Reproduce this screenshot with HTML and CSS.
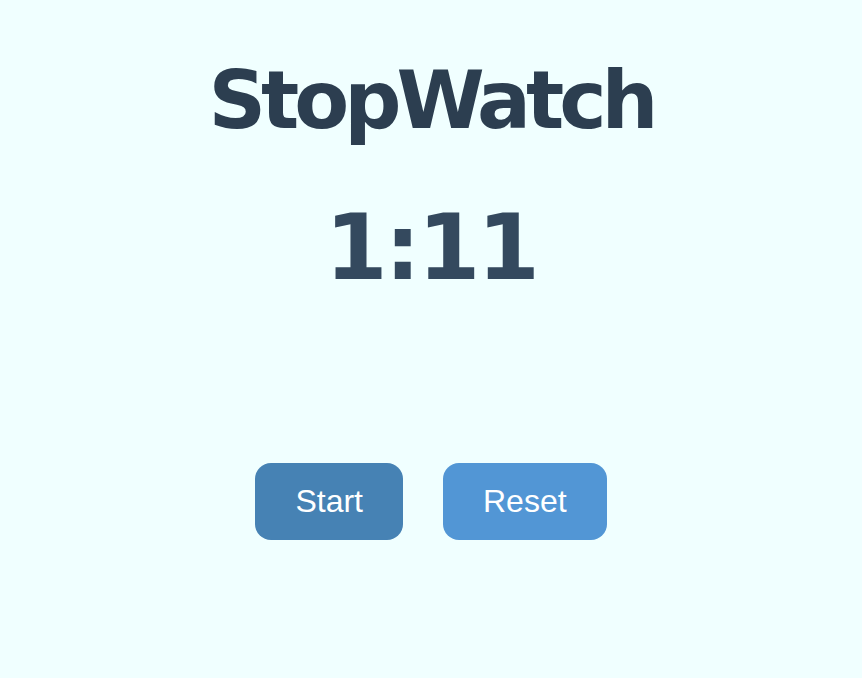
FILE: index.html
```html
<!DOCTYPE html>
<html>
<head>
<meta charset="utf-8">
<link rel="stylesheet" href="styles.css">
</head>
<body>
<main class="app">
  <h1 class="title">StopWatch</h1>
  <div class="time">1:11</div>
  <div class="controls">
    <button class="btn btn-start">Start</button>
    <button class="btn btn-reset">Reset</button>
  </div>
</main>
</body>
</html>
```
FILE: styles.css
```css
html, body {
  margin: 0;
  padding: 0;
  background: #f0ffff;
  height: 100%;
}
.app {
  display: flex;
  flex-direction: column;
  align-items: center;
  padding-top: 51px;
}
.title {
  margin: 0;
  font-family: "DejaVu Sans", sans-serif;
  font-weight: bold;
  font-size: 80px;
  line-height: 100px;
  color: #2c3e50;
  letter-spacing: -5px;
}
.time {
  margin-top: 42px;
  font-family: "DejaVu Sans", sans-serif;
  font-weight: bold;
  font-size: 90px;
  line-height: 110px;
  color: #34495e;
  letter-spacing: -3px;
}
.controls {
  display: flex;
  gap: 40px;
  margin-top: 160px;
}
.btn {
  font-family: "Liberation Sans", Arial, sans-serif;
  font-size: 32px;
  line-height: 37px;
  padding: 20px 40px;
  color: #fff;
  border: none;
  border-radius: 16px;
}
.btn-start { background: #4682b4; }
.btn-reset { background: #5296d5; }
```
